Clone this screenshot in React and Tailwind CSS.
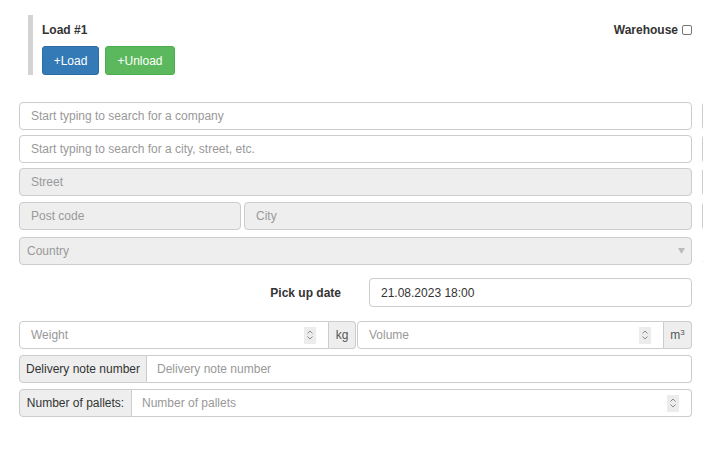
import React from "react";

function Stepper() {
  return (
    <div className="flex h-[17px] w-[12px] shrink-0 items-center justify-center bg-[#ececec]">
      <svg width="8" height="12" viewBox="0 0 8 12" fill="none" stroke="#8a8a8a" strokeWidth="1">
        <path d="M1.5 4.5 L4 2 L6.5 4.5" />
        <path d="M1.5 7.5 L4 10 L6.5 7.5" />
      </svg>
    </div>
  );
}

function Stub() {
  return <div className="ml-[10px] h-full w-[20px] shrink-0 rounded-l-[4px] border border-r-0 border-[#ccc]" />;
}

export default function App() {
  return (
    <div className="w-[703px] h-[468px] overflow-hidden bg-white text-[12px] text-[#333]" style={{ fontFamily: '"Liberation Sans", Arial, sans-serif' }}>
      {/* header */}
      <div className="pt-[15px] pl-[28px] pr-[11px] flex">
        <div className="flex h-[60px] flex-1 border-l-[5px] border-[#d3d3d3] pl-[9px]">
          <div className="flex flex-col">
            <div className="mt-[8px] h-[14px] font-bold leading-[14px]">Load #1</div>
            <div className="mt-[9px] flex gap-[6px]">
              <button className="h-[29px] w-[57px] rounded-[3px] border border-[#2e6da4] bg-[#337ab7] text-[12px] text-white">+Load</button>
              <button className="h-[29px] w-[70px] rounded-[3px] border border-[#4cae4c] bg-[#5cb85c] text-[12px] text-white">+Unload</button>
            </div>
          </div>
          <div className="ml-auto mt-[8px] flex h-[14px] items-center gap-[4px]">
            <span className="font-bold">Warehouse</span>
            <span className="block h-[10px] w-[10px] rounded-[2px] border border-[#767676] bg-white" />
          </div>
        </div>
      </div>

      {/* address block */}
      <div className="mt-[27px] flex flex-col pl-[19px]">
        <div className="flex h-[28px]">
          <div className="flex w-[673px] shrink-0 items-center rounded-[4px] border border-[#ccc] px-[11px] text-[#999]">Start typing to search for a company</div>
          <Stub />
        </div>
        <div className="mt-[5px] flex h-[28px]">
          <div className="flex w-[673px] shrink-0 items-center rounded-[4px] border border-[#ccc] px-[11px] text-[#999]">Start typing to search for a city, street, etc.</div>
          <Stub />
        </div>
        <div className="mt-[5px] flex h-[28px]">
          <div className="flex w-[673px] shrink-0 items-center rounded-[4px] border border-[#ccc] bg-[#eee] px-[11px] text-[#999]">Street</div>
          <Stub />
        </div>
        <div className="mt-[6px] flex h-[28px]">
          <div className="flex w-[673px] shrink-0 gap-[3px]">
            <div className="flex w-[222px] items-center rounded-[4px] border border-[#ccc] bg-[#eee] px-[11px] text-[#999]">Post code</div>
            <div className="flex flex-1 items-center rounded-[4px] border border-[#ccc] bg-[#eee] px-[11px] text-[#999]">City</div>
          </div>
          <Stub />
        </div>
        <div className="mt-[7px] flex h-[28px]">
          <div className="flex w-[673px] shrink-0 items-center rounded-[4px] border border-[#ccc] bg-[#eee] pl-[7px] pr-[6px] text-[#999]">
            <span>Country</span>
            <svg className="ml-auto" width="7" height="6" viewBox="0 0 7 6">
              <path d="M0 0 H7 L3.5 6 Z" fill="#bbb" />
            </svg>
          </div>
          <div className="ml-[10px] flex items-end pb-[1px] text-[8px] leading-none text-[#e08a2e]">.</div>
        </div>

        {/* pick up date */}
        <div className="mt-[13px] flex h-[29px] w-[673px] items-center">
          <div className="w-[322px] text-right font-bold">Pick up date</div>
          <div className="ml-[28px] flex h-full flex-1 items-center rounded-[4px] border border-[#ccc] px-[11px] text-[#333]">21.08.2023 18:00</div>
        </div>

        {/* weight / volume */}
        <div className="mt-[14px] flex h-[28px] w-[673px]">
          <div className="flex flex-1 items-center rounded-l-[4px] border border-[#ccc] pl-[11px] pr-[12px] text-[#999]">
            <span>Weight</span>
            <span className="ml-auto"><Stepper /></span>
          </div>
          <div className="flex w-[27px] items-center justify-center rounded-r-[4px] border border-l-0 border-[#ccc] bg-[#eee] text-[#555]">kg</div>
          <div className="ml-[1px] flex w-[307px] items-center rounded-l-[4px] border border-[#ccc] pl-[11px] pr-[12px] text-[#999]">
            <span>Volume</span>
            <span className="ml-auto"><Stepper /></span>
          </div>
          <div className="flex w-[28px] items-center justify-center rounded-r-[4px] border border-l-0 border-[#ccc] bg-[#eee] text-[#555]">
            <span>m<sup className="text-[8px]">3</sup></span>
          </div>
        </div>

        {/* delivery note */}
        <div className="mt-[6px] flex h-[28px] w-[673px]">
          <div className="flex w-[128px] items-center justify-center rounded-l-[4px] border border-[#ccc] bg-[#eee] text-[#333]">Delivery note number</div>
          <div className="flex flex-1 items-center rounded-r-[4px] border border-l-0 border-[#ccc] px-[10px] text-[#999]">Delivery note number</div>
        </div>

        {/* pallets */}
        <div className="mt-[6px] flex h-[28px] w-[673px]">
          <div className="flex w-[113px] items-center justify-center rounded-l-[4px] border border-[#ccc] bg-[#eee] text-[#333]">Number of pallets:</div>
          <div className="flex flex-1 items-center rounded-r-[4px] border border-l-0 border-[#ccc] pl-[10px] pr-[12px] text-[#999]">
            <span>Number of pallets</span>
            <span className="ml-auto"><Stepper /></span>
          </div>
        </div>
      </div>
    </div>
  );
}
